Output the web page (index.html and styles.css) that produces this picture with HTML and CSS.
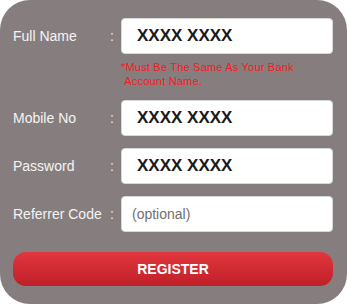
FILE: index.html
```html
<!DOCTYPE html>
<html lang="en">
<head>
    <meta charset="UTF-8">
    <meta name="viewport" content="width=device-width, initial-scale=1.0">
    <title>Register</title>
    <link rel="stylesheet" href="styles.css">
</head>
<body>

    <form class="register-box">
        <div class="row">
            <label class="label">Full Name</label>
            <span class="colon">:</span>
            <input class="field filled" type="text" value="XXXX XXXX">
        </div>
        <div class="note">*Must Be The Same As Your Bank<br>&nbsp;Account Name.</div>

        <div class="row">
            <label class="label">Mobile No</label>
            <span class="colon">:</span>
            <input class="field filled" type="text" value="XXXX XXXX">
        </div>

        <div class="row">
            <label class="label">Password</label>
            <span class="colon">:</span>
            <input class="field filled" type="text" value="XXXX XXXX">
        </div>

        <div class="row">
            <label class="label">Referrer Code</label>
            <span class="colon">:</span>
            <input class="field" type="text" placeholder="(optional)">
        </div>

        <button class="register-btn" type="button">REGISTER</button>
    </form>

</body>
</html>
```

FILE: styles.css
```css
body {
    margin: 0;
    font-family: "Liberation Sans", Arial, sans-serif;
    background: #ffffff;
}

.register-box {
    width: 347px;
    height: 304px;
    box-sizing: border-box;
    padding: 18px 14px 0 13px;
    background: #867e7e;
    border-radius: 30px;
    display: flex;
    flex-direction: column;
}

.row {
    display: flex;
    align-items: center;
    height: 36px;
    margin-bottom: 12px;
}

.label {
    width: 97px;
    color: #f4f4f4;
    font-size: 14px;
}

.colon {
    width: 11px;
    color: #e6e6e6;
    font-size: 14px;
}

.field {
    width: 212px;
    height: 36px;
    box-sizing: border-box;
    border: 1px solid #d8d8d8;
    border-radius: 4px;
    background: #ffffff;
    padding: 0 0 0 10px;
    font-family: "Liberation Sans", Arial, sans-serif;
    font-size: 14px;
    color: #222222;
    outline: none;
}

.field::placeholder {
    color: #6f6f6f;
}

.field.filled {
    padding-left: 15px;
    font-size: 17px;
    font-weight: bold;
    color: #1a1a1a;
}

.note {
    margin: -6px 0 12px 108px;
    color: #ff1522;
    font-size: 11px;
    letter-spacing: 0.2px;
    line-height: 14px;
}

.register-btn {
    margin-top: 8px;
    width: 320px;
    height: 34px;
    border: none;
    border-radius: 13px;
    background: linear-gradient(#e2363e, #bf1f28);
    color: #ffffff;
    font-family: "Liberation Sans", Arial, sans-serif;
    font-size: 14px;
    font-weight: bold;
}
```
